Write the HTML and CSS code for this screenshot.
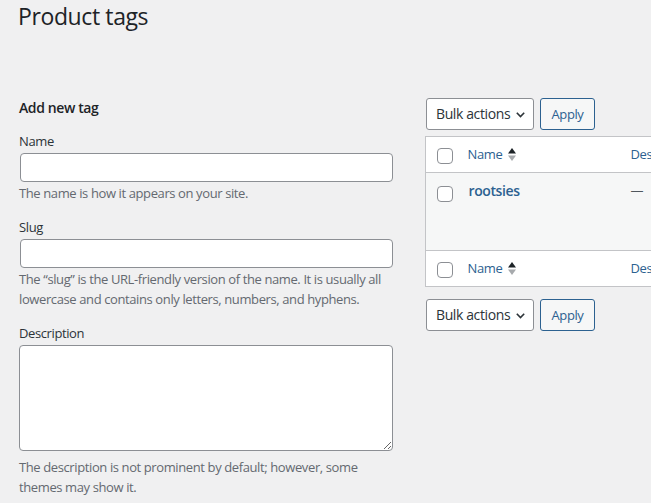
FILE: index.html
```html
<!DOCTYPE html>
<html lang="en">
<head>
<meta charset="utf-8">
<title>Product tags</title>
<link rel="stylesheet" href="styles.css">
</head>
<body>
<div class="wrap">
  <h1 class="page-title">Product tags</h1>
  <div class="cols">
    <div class="col-left">
      <h2 class="form-title">Add new tag</h2>
      <div class="form-field">
        <label class="field-label" for="tag-name">Name</label>
        <input class="text-input" id="tag-name" type="text">
        <p class="help">The name is how it appears on your site.</p>
      </div>
      <div class="form-field">
        <label class="field-label" for="tag-slug">Slug</label>
        <input class="text-input" id="tag-slug" type="text">
        <p class="help">The “slug” is the URL-friendly version of the name. It is usually all lowercase and contains only letters, numbers, and hyphens.</p>
      </div>
      <div class="form-field">
        <label class="field-label" for="tag-description">Description</label>
        <textarea class="textarea" id="tag-description"></textarea>
        <p class="help help-textarea">The description is not prominent by default; however, some themes may show it.</p>
      </div>
    </div>
    <div class="col-right">
      <div class="tablenav">
        <div class="select">Bulk actions
          <svg class="chevron" width="9" height="6" viewBox="0 0 9 6"><path d="M0.8 0.8 L4.5 4.6 L8.2 0.8" fill="none" stroke="#2c3338" stroke-width="1.6"/></svg>
        </div>
        <button class="button" type="button">Apply</button>
      </div>
      <table class="list-table">
        <thead>
          <tr>
            <th class="check-col"><input class="check" type="checkbox"></th>
            <th class="name-col"><a class="sort-link" href="#">Name<svg class="sort-icon" width="8" height="13" viewBox="0 0 8 13"><path d="M4 0 L8 5.4 H0 Z" fill="#1d2327"/><path d="M0 7.6 H8 L4 13 Z" fill="#a7aaad"/></svg></a></th>
            <th class="desc-col"><a class="sort-link" href="#">Description</a></th>
          </tr>
        </thead>
        <tbody>
          <tr class="row-odd">
            <td class="check-col check-body"><input class="check" type="checkbox"></td>
            <td class="name-col name-body"><a class="row-title" href="#">rootsies</a></td>
            <td class="desc-col desc-body">—</td>
          </tr>
        </tbody>
        <tfoot>
          <tr>
            <th class="check-col"><input class="check" type="checkbox"></th>
            <th class="name-col"><a class="sort-link" href="#">Name<svg class="sort-icon" width="8" height="13" viewBox="0 0 8 13"><path d="M4 0 L8 5.4 H0 Z" fill="#1d2327"/><path d="M0 7.6 H8 L4 13 Z" fill="#a7aaad"/></svg></a></th>
            <th class="desc-col"><a class="sort-link" href="#">Description</a></th>
          </tr>
        </tfoot>
      </table>
      <div class="tablenav tablenav-bottom">
        <div class="select">Bulk actions
          <svg class="chevron" width="9" height="6" viewBox="0 0 9 6"><path d="M0.8 0.8 L4.5 4.6 L8.2 0.8" fill="none" stroke="#2c3338" stroke-width="1.6"/></svg>
        </div>
        <button class="button" type="button">Apply</button>
      </div>
    </div>
  </div>
</div>
</body>
</html>
```
FILE: styles.css
```css
html, body {
  margin: 0;
  overflow: hidden;
}

body {
  background: #f0f0f1;
  font-family: "Open Sans", "Noto Sans", sans-serif;
  font-size: 13px;
  line-height: 19.5px;
  color: #2c3338;
  letter-spacing: -0.03em;
}

.wrap {
  padding-left: 19px;
}

.page-title {
  margin: 0 0 0 -1px;
  padding-top: 1px;
  font-size: 23px;
  font-weight: 400;
  line-height: 30px;
  color: #1d2327;
}

.cols {
  display: flex;
  margin-top: 67px;
}

.col-left {
  flex: none;
  width: 374px;
}

.col-right {
  flex: 1;
  min-width: 0;
  margin-left: 32px;
  overflow: hidden;
}

.form-title {
  margin: 0 0 14px;
  font-size: 14px;
  font-weight: 600;
  line-height: 20px;
  color: #1d2327;
}

.form-field + .form-field {
  margin-top: 14.5px;
}

.field-label {
  display: block;
  margin-bottom: 1.5px;
  color: #2c3338;
}

.text-input {
  display: block;
  box-sizing: border-box;
  width: 373px;
  height: 29px;
  margin: 0 0 0 1px;
  border: 1px solid #8c8f94;
  border-radius: 4px;
  background: #fff;
}

.textarea {
  display: block;
  box-sizing: border-box;
  width: 374px;
  height: 106px;
  margin: 0;
  border: 1px solid #8c8f94;
  border-radius: 4px;
  background: #fff;
}

.help {
  margin: 2px 0 0;
  color: #646970;
}

.help-textarea {
  margin-top: 6px;
  line-height: 20px;
}

.tablenav {
  display: flex;
  gap: 6px;
  height: 32px;
}

.tablenav-bottom {
  margin-top: 12px;
}

.select {
  box-sizing: border-box;
  display: flex;
  align-items: center;
  justify-content: space-between;
  width: 108px;
  height: 32px;
  margin-left: 1px;
  padding: 0 8px 0 9px;
  border: 1px solid #8c8f94;
  border-radius: 3px;
  background: #fff;
  font-size: 14px;
  color: #2c3338;
}

.chevron {
  display: block;
  margin-top: 1px;
}

.button {
  box-sizing: border-box;
  width: 55px;
  height: 32px;
  padding: 0 10px;
  border: 1px solid #2c6190;
  border-radius: 3px;
  background: #f6f7f7;
  color: #2c6190;
  font-family: inherit;
  font-size: 13px;
  letter-spacing: inherit;
}

.list-table {
  width: 330px;
  margin-top: 6px;
  border-collapse: collapse;
  border: 1px solid #c3c4c7;
  background: #fff;
  table-layout: fixed;
}

.list-table th,
.list-table td {
  padding: 8px 0 0 10px;
  vertical-align: top;
  text-align: left;
  font-weight: 400;
  box-sizing: border-box;
}

.list-table thead tr {
  border-bottom: 1px solid #c3c4c7;
}

.list-table tfoot tr {
  border-top: 1px solid #c3c4c7;
}

.list-table thead th,
.list-table tfoot th {
  height: 36px;
}

.check-col {
  width: 32px;
}

.list-table .check-col {
  padding: 11px 0 0 11px;
}

.list-table .check-body {
  padding-top: 13px;
}

.name-col {
  width: 163px;
}

.row-odd {
  background: #f6f7f7;
}

.row-odd td {
  height: 78px;
}

.list-table .name-body {
  padding-left: 11px;
  padding-top: 8px;
}

.check {
  appearance: none;
  display: block;
  box-sizing: border-box;
  width: 16px;
  height: 16px;
  margin: 0;
  border: 1px solid #8c8f94;
  border-radius: 4px;
  background: #fff;
}

.sort-link {
  color: #2c6190;
  text-decoration: none;
  white-space: nowrap;
}

.sort-icon {
  margin-left: 6px;
  vertical-align: -1.5px;
}

.row-title {
  color: #2c6190;
  font-size: 14px;
  font-weight: 600;
  text-decoration: none;
}

.desc-body {
  color: #50575e;
}
```
